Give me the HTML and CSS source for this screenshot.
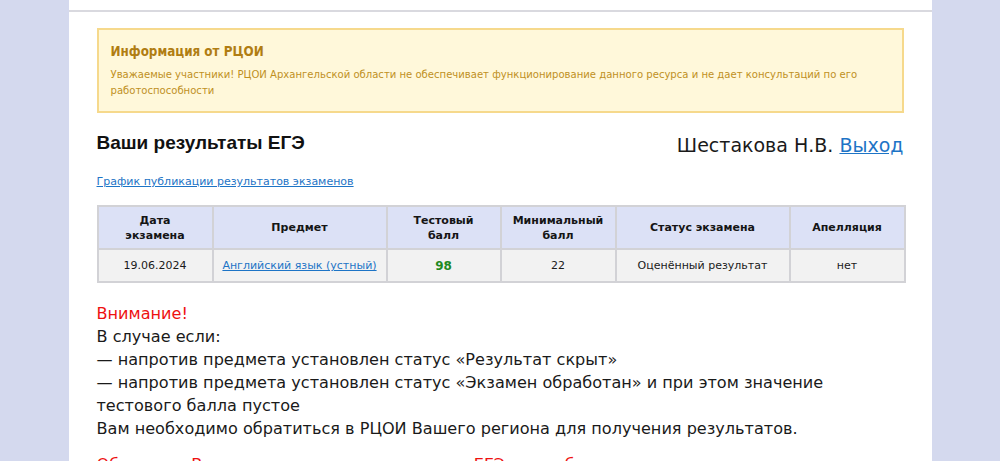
FILE: index.html
```html
<!DOCTYPE html>
<html lang="ru">
<head>
<meta charset="utf-8">
<title>Результаты ЕГЭ</title>
<link rel="stylesheet" href="styles.css">
</head>
<body>
<div class="page">
  <div class="topbar"></div>
  <div class="content">
    <div class="notice">
      <div class="notice-title">Информация от РЦОИ</div>
      <div class="notice-text">Уважаемые участники! РЦОИ Архангельской области не обеспечивает функционирование данного ресурса и не дает консультаций по его работоспособности</div>
    </div>
    <div class="head-row">
      <h1 class="title">Ваши результаты ЕГЭ</h1>
      <div class="user">Шестакова Н.В. <a href="#" class="logout">Выход</a></div>
    </div>
    <a href="#" class="schedule">График публикации результатов экзаменов</a>
    <table class="results">
      <colgroup>
        <col class="c1"><col class="c2"><col class="c3"><col class="c4"><col class="c5"><col class="c6">
      </colgroup>
      <thead>
        <tr>
          <th>Дата<br>экзамена</th>
          <th>Предмет</th>
          <th>Тестовый<br>балл</th>
          <th>Минимальный<br>балл</th>
          <th>Статус экзамена</th>
          <th>Апелляция</th>
        </tr>
      </thead>
      <tbody>
        <tr>
          <td>19.06.2024</td>
          <td><a href="#" class="subject">Английский язык (устный)</a></td>
          <td class="score">98</td>
          <td>22</td>
          <td>Оценённый результат</td>
          <td>нет</td>
        </tr>
      </tbody>
    </table>
    <div class="warning">
      <div class="red">Внимание!</div>
      <div>В случае если:</div>
      <div>— напротив предмета установлен статус «Результат скрыт»</div>
      <div>— напротив предмета установлен статус «Экзамен обработан» и при этом значение тестового балла пустое</div>
      <div>Вам необходимо обратиться в РЦОИ Вашего региона для получения результатов.</div>
      <div class="red note">Обращаем Ваше внимание, что результаты ЕГЭ могут быть изменены</div>
    </div>
  </div>
</div>
</body>
</html>
```
FILE: styles.css
```css
html, body {
  margin: 0;
  padding: 0;
}
body {
  background: #d4d9ee;
  font-family: "DejaVu Sans", Verdana, sans-serif;
  color: #1a1a1a;
  height: 461px;
  overflow: hidden;
}
.page {
  width: 863px;
  margin: 0 auto;
  background: #ffffff;
  min-height: 461px;
}
.topbar {
  height: 10px;
  border-bottom: 2px solid #d9d9df;
}
.content {
  padding: 16px 28px 0 28px;
}
.notice {
  background: #fff8da;
  border: 2px solid #f6d98c;
  padding: 13px 12px 12px 12px;
}
.notice-title {
  font-family: "DejaVu Sans Condensed", "DejaVu Sans", sans-serif;
  font-weight: bold;
  font-size: 13.3px;
  color: #b07d12;
  line-height: 18px;
  margin-bottom: 6px;
}
.notice-text {
  font-family: "DejaVu Sans Condensed", "DejaVu Sans", sans-serif;
  font-size: 11.2px;
  line-height: 16px;
  color: #c0901e;
}
.head-row {
  display: flex;
  justify-content: space-between;
  align-items: flex-start;
  margin-top: 18px;
}
.title {
  font-family: "Liberation Sans", Arial, sans-serif;
  font-size: 19px;
  font-weight: bold;
  margin: 0;
  line-height: 24px;
  color: #111;
}
.user {
  font-size: 19px;
  line-height: 24px;
  color: #1a1a1a;
  margin-top: 2px;
}
.logout {
  color: #1d74c6;
  text-decoration: underline;
}
.schedule {
  display: inline-block;
  margin-top: 17px;
  font-size: 11px;
  line-height: 16px;
  color: #1d74c6;
  text-decoration: underline;
}
.results {
  width: 807px;
  border-collapse: collapse;
  margin-top: 15px;
  font-size: 11px;
  table-layout: fixed;
}
.results th, .results td {
  border: 2px solid #d2d2d6;
  text-align: center;
}
.results th {
  background: #dce1f6;
  font-weight: bold;
  line-height: 15px;
  height: 41px;
  padding: 0 4px;
  color: #151515;
}
.results td {
  background: #f2f2f2;
  height: 31px;
  padding: 0 4px;
  color: #1a1a1a;
}
.c1 { width: 115px; }
.c2 { width: 174px; }
.c3 { width: 114px; }
.c4 { width: 115px; }
.c5 { width: 174px; }
.c6 { width: 115px; }
.subject {
  color: #1d74c6;
  text-decoration: underline;
}
.results td.score {
  color: #1f8a1f;
  font-weight: bold;
  font-size: 12px;
}
.warning {
  margin-top: 19px;
  font-size: 16.1px;
  line-height: 23px;
  color: #1a1a1a;
}
.red {
  color: #ee1111;
}
.note {
  margin-top: 13px;
}
```
